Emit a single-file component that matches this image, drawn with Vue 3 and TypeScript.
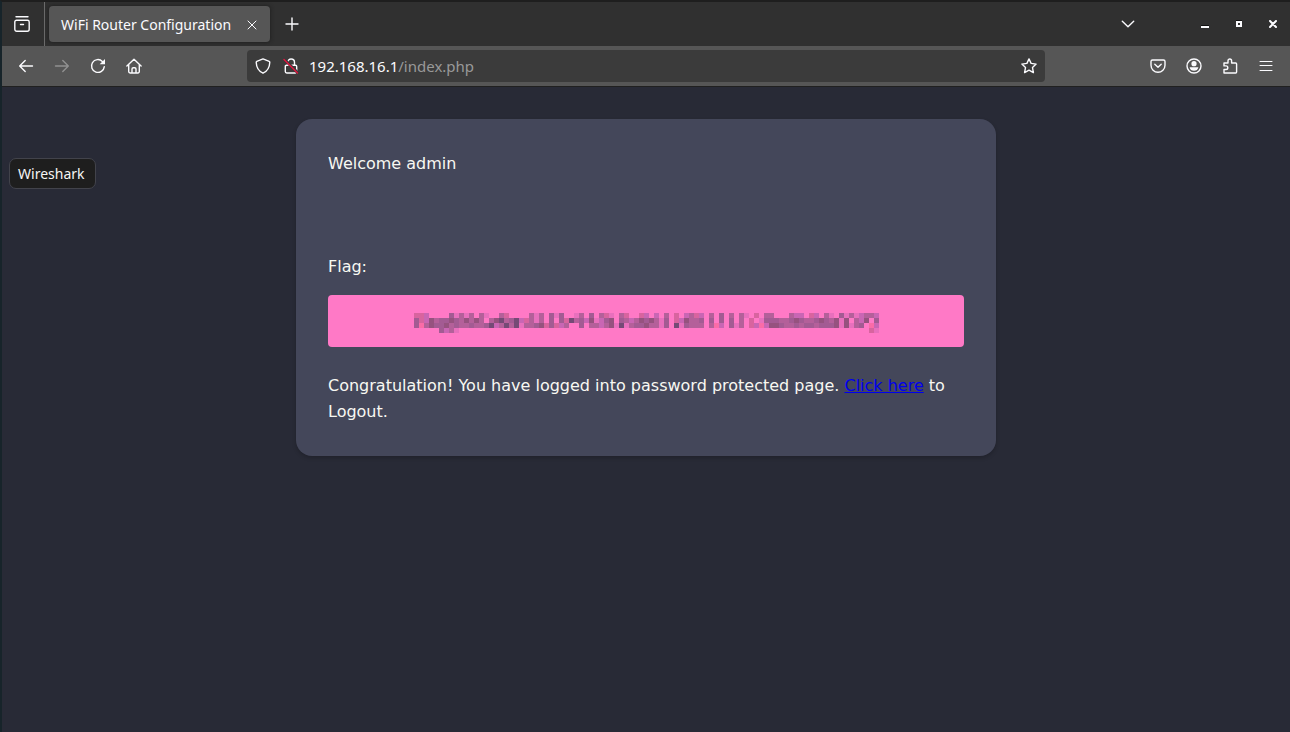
<script setup lang="ts">
interface Cell { x: number; y: number; fill: string }

const palette: Record<string, string> = {
  a: '#e870bd', b: '#c966b4', c: '#d8649f', d: '#b4609a',
  e: '#a35b93', f: '#96527f', g: '#754a76', h: '#fa6ca8',
}

/* Censored value: 93 columns by 4 rows of 5px blocks */
const mosaic: string[] = [
  'ccb....eadad.da..dc....d' + 'ad.eae..ad.e.dca.dc..cb.' + 'b.d.c.bdcb.d.e.d.da.c.dd' + '...dbb.cb.da.eadabddb',
  'ecbfdeefedfdfd.dfgdegbcd' + 'ad.e.ecgdebfabef.edbdfef' + 'dae.cbfdde.e.e.e.d.c.aee' + 'eddefeddefedfaf.dbf.e',
  'ehdfeefdeddeddegbdgdgadd' + 'efcecbd..e.ddbdfagadeefd' + 'dae.gaeddd.dhb.ead.cbhbf' + 'feddedeedeeefafade.hb',
  '.....ebda' + '.'.repeat(82) + 'ca',
]

const cells: Cell[] = mosaic.flatMap((row, r) =>
  [...row].flatMap((key, c) => (palette[key] ? [{ x: c * 5, y: r * 5, fill: palette[key] }] : [])),
)
</script>

<template>
  <div class="window">
    <header class="tabs">
      <button class="view" aria-label="Recent browsing">
        <svg width="18" height="18" viewBox="0 0 18 18"><path d="M3 1.7h12M3.500 5.200h11a1.700 1.700 0 0 1 1.700 1.700v7.400a1.900 1.900 0 0 1-1.900 1.900H3.700a1.900 1.900 0 0 1-1.900-1.900V6.900a1.700 1.700 0 0 1 1.700-1.700zM7.500 9.500h3" /></svg>
      </button>
      <div class="tab">
        <span>WiFi Router Configuration</span>
        <button aria-label="Close tab"><svg width="10" height="10" viewBox="0 0 10 10"><path class="thin" d="M1 1l8 8M9 1L1 9" /></svg></button>
      </div>
      <button class="new" aria-label="New tab"><svg width="14" height="14" viewBox="0 0 14 14"><path d="M7 1v12M1 7h12" /></svg></button>
      <div class="controls">
        <button class="list" aria-label="List all tabs"><svg width="14" height="8" viewBox="0 0 14 8"><path d="M1.300 1.200L7 6.700l5.700-5.500" /></svg></button>
        <button aria-label="Minimize"><svg width="8" height="12" viewBox="0 0 8 12"><path class="shade" d="M0 7h8v1H0z" /><path class="solid" d="M0 8h8v2H0z" /></svg></button>
        <button aria-label="Maximize"><svg width="6" height="8" viewBox="0 0 6 8"><path class="shade" d="M0 0h6v1H0z" /><path class="solid" fill-rule="evenodd" d="M0 1h6v6H0zM2 3v2h2V3z" /></svg></button>
        <button aria-label="Close window"><svg width="8" height="8" viewBox="0 0 8 8"><path class="heavy" d="M1 1l6 6M7 1L1 7" /></svg></button>
      </div>
    </header>

    <nav class="toolbar">
      <div class="navigation">
        <button aria-label="Back"><svg width="16" height="16" viewBox="0 0 16 16"><path d="M14.500 8H1.800M7.200 2.500L1.700 8l5.500 5.500" /></svg></button>
        <button class="disabled" aria-label="Forward" disabled><svg width="16" height="16" viewBox="0 0 16 16"><path d="M1.500 8h12.700M8.800 2.500L14.300 8l-5.500 5.500" /></svg></button>
        <button aria-label="Reload"><svg width="16" height="16" viewBox="0 0 16 16"><path d="M14.300 8.600A6.400 6.400 0 1 1 12.400 3.400l1 1" /><path class="solid" d="M15 1v5.300H9.700z" /></svg></button>
        <button aria-label="Home"><svg width="16" height="16" viewBox="0 0 16 16"><path d="M.9 8L8 1.200 15.100 8M2.700 6.500v7.100a1.400 1.400 0 0 0 1.400 1.400h7.800a1.400 1.400 0 0 0 1.400-1.400V6.500M6 15v-4a1.300 1.300 0 0 1 1.300-1.300h1.400A1.300 1.300 0 0 1 10 11v4" /></svg></button>
      </div>
      <div class="address">
        <button aria-label="Tracking protection"><svg width="16" height="16" viewBox="0 0 16 16"><path d="M8 .9l6.200 2.400c.5.200.7.500.6 1C14.600 9.500 12.300 13.300 8 15.200 3.700 13.300 1.400 9.500 1.200 4.300c0-.5.200-.8.6-1z" /></svg></button>
        <button aria-label="Connection not secure"><svg width="16" height="16" viewBox="0 0 16 16"><path d="M4.700 6.500V4.400a3.400 3.400 0 0 1 6.800 0v2.300M3.500 7.200h9a1.200 1.200 0 0 1 1.200 1.200v5.200a1.400 1.400 0 0 1-1.400 1.400H3.700a1.400 1.400 0 0 1-1.400-1.400V8.400a1.200 1.200 0 0 1 1.200-1.200z" /><path class="gap" d="M1.500 1.500l13.200 13.200" /><path class="strike" d="M1 1.500l13.500 13.500" /></svg></button>
        <a class="url" href="#">192.168.16.1<span>/index.php</span></a>
        <button aria-label="Bookmark this page"><svg width="16" height="16" viewBox="0 0 16 16"><path d="M8 .9l2.100 4.500 5 .7-3.600 3.500.9 5L8 12.200l-4.400 2.400.9-5L.9 6.100l5-.7z" /></svg></button>
      </div>
      <div class="actions">
        <button aria-label="Save to Pocket"><svg width="16" height="16" viewBox="0 0 16 16"><path d="M2.500 2h11a1.500 1.500 0 0 1 1.500 1.500v3.700a7 7 0 0 1-14 0V3.500A1.500 1.500 0 0 1 2.500 2zM4.800 6.200L8 9.200l3.200-3" /></svg></button>
        <button aria-label="Account"><svg width="16" height="16" viewBox="0 0 16 16"><circle cx="8" cy="8" r="7" /><circle class="solid" cx="8" cy="5.700" r="2.600" /><path class="solid" d="M3.600 9.200h8.800a4.500 4.500 0 0 1-8.800 0z" /></svg></button>
        <button aria-label="Extensions"><svg width="16" height="16" viewBox="0 0 16 16"><path d="M2 15v-3.500h2a1.800 1.800 0 0 0 0-3.600H2V5h4V2.800a1.800 1.800 0 0 1 3.600 0V5h4.100a.9.900 0 0 1 .9.900v8.200a.9.900 0 0 1-.9.900z" /></svg></button>
        <button aria-label="Menu"><svg width="14" height="14" viewBox="0 0 14 14"><path class="thin" d="M1 2.500h12M1 6.500h12M1 11.500h12" /></svg></button>
      </div>
    </nav>

    <div class="page">
      <div class="tooltip" role="tooltip">Wireshark</div>
      <main class="card">
        <p class="welcome">Welcome admin</p>
        <p>Flag:</p>
        <div class="flag">
          <svg width="465" height="20" viewBox="0 0 465 20" shape-rendering="crispEdges" role="img" aria-label="Hidden flag">
            <rect v-for="(cell, i) in cells" :key="i" :x="cell.x" :y="cell.y" width="5" height="5" :fill="cell.fill" />
          </svg>
        </div>
        <p>Congratulation! You have logged into password protected page. <a href="#">Click here</a> to Logout.</p>
      </main>
    </div>
  </div>
</template>

<style>
body { margin: 0; background: #282a36; }
</style>

<style scoped>
.window {
  box-sizing: border-box;
  min-height: 100vh;
  border-top: 2px solid #1e1e1e;
  border-left: 2px solid #17242a;
  background: #282a36;
  color: #fbfbfe;
  font: 14px/20px "Noto Sans", "Open Sans", sans-serif;
  display: flex;
  flex-direction: column;
}
button {
  display: flex;
  align-items: center;
  justify-content: center;
  padding: 0;
  border: 0;
  background: none;
  color: inherit;
  font: inherit;
}
svg { display: block; }
button svg { fill: none; stroke: currentColor; stroke-width: 1.4; stroke-linecap: round; stroke-linejoin: round; }
button svg .thin { stroke-width: 1; }
button svg .heavy { stroke-width: 2; }
button svg .solid { fill: currentColor; stroke: none; }
button svg .shade { fill: #111; stroke: none; }
button svg .gap { stroke: #3b3b3b; stroke-width: 3; }
button svg .strike { stroke: #e2143f; }
.tabs { height: 44px; display: flex; align-items: center; background: #303030; }
.view {
  box-sizing: border-box;
  width: 43px;
  height: 44px;
  padding-right: 2px;
  border-right: 1px solid #6b6b6b;
}
.tab {
  box-sizing: border-box;
  width: 221px;
  height: 36px;
  margin-left: 4px;
  padding: 2px 13px 0 12px;
  display: flex;
  align-items: center;
  justify-content: space-between;
  border-radius: 4px;
  background: #565656;
  box-shadow: 0 0 4px #1c1c1c;
  white-space: nowrap;
}
.new { width: 44px; }
.controls { margin-left: auto; display: flex; align-items: center; }
.controls button { width: 34px; }
.controls .list { width: 36px; margin-right: 42px; }
.toolbar {
  height: 40px;
  display: flex;
  align-items: center;
  justify-content: space-between;
  background: #565656;
  border-bottom: 1px solid #202020;
}
.navigation, .actions { display: flex; align-items: center; gap: 4px; padding: 0 8px; }
.navigation button, .actions button { width: 32px; height: 32px; }
.navigation { flex: 1; }
.actions { flex: 1; justify-content: flex-end; }
.disabled { color: #919191; }
.address {
  box-sizing: border-box;
  width: 62%;
  max-width: 798px;
  height: 32px;
  padding: 0 8px;
  display: flex;
  align-items: center;
  gap: 12px;
  border-radius: 4px;
  background: #3b3b3b;
}
.url { flex: 1; margin-left: -2px; color: #fbfbfe; font-size: 15px; text-decoration: none; }
.url span { color: #999; }
.page {
  position: relative;
  flex: 1;
  padding: 32px 0;
  color: #f8f8f2;
  font: 16px/26px "DejaVu Sans", sans-serif;
}
.tooltip {
  position: absolute;
  top: 71px;
  left: 7px;
  padding: 5px 10px 4px 8px;
  border: 1px solid #42434b;
  border-radius: 7px;
  background: #1e1e1e;
  color: #f5f5f5;
  font: 14px/20px "Noto Sans", "Open Sans", sans-serif;
}
.card {
  box-sizing: border-box;
  max-width: 700px;
  margin: 0 auto;
  padding: 32px 32px 31px;
  border-radius: 16px;
  background: #44475a;
  box-shadow: 0 2px 4px rgba(0, 0, 0, 0.2);
}
.card p { margin: 0; }
.card .welcome { margin-bottom: 77px; }
.card a { color: #0000ee; }
.flag {
  margin: 15px 0 26px;
  padding: 18px 16px 14px;
  display: flex;
  justify-content: center;
  border-radius: 4px;
  background: #ff79c6;
}
</style>
